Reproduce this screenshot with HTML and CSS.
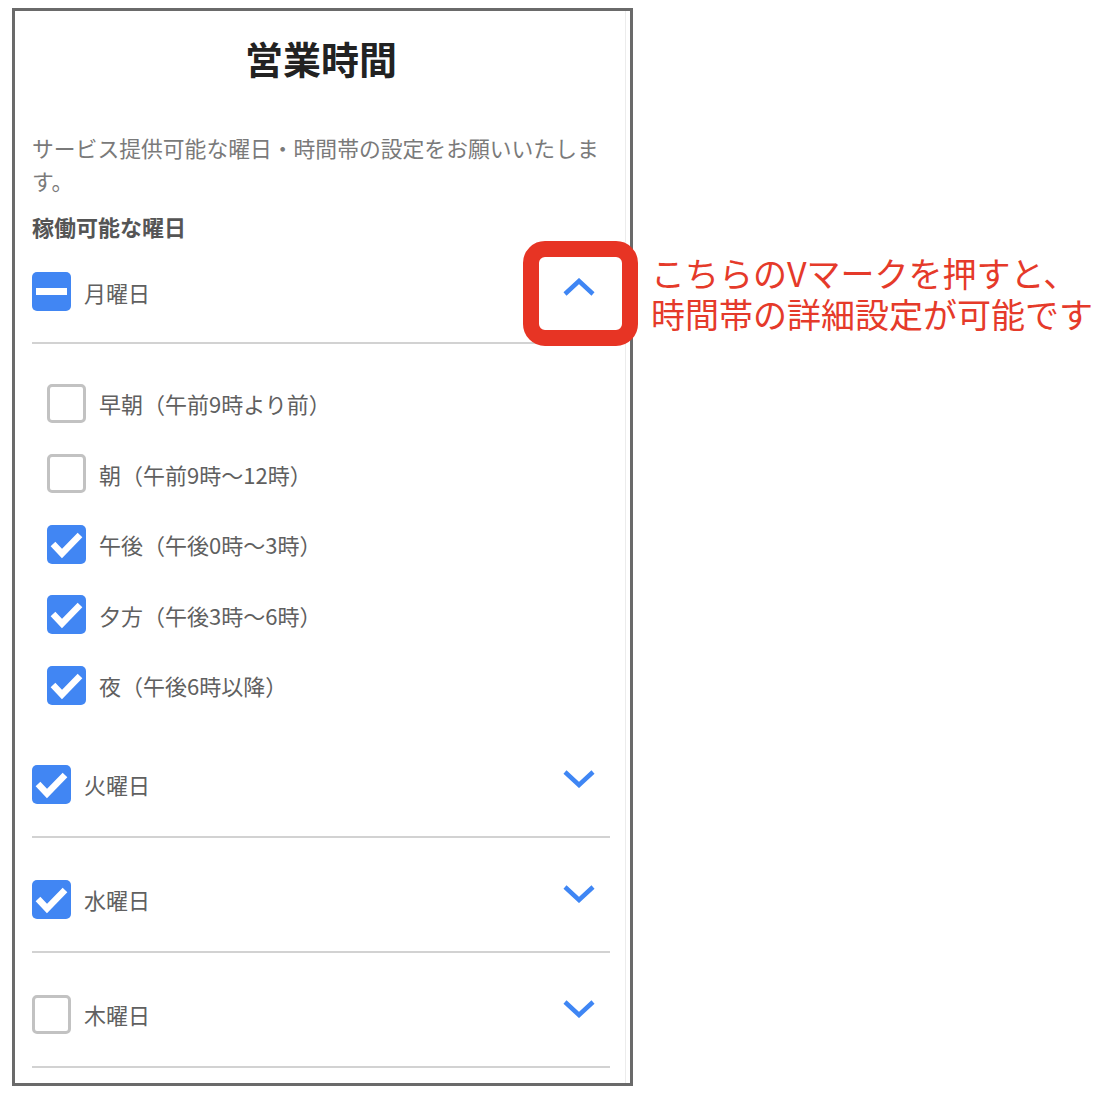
FILE: index.html
```html
<!DOCTYPE html>
<html lang="ja">
  <head>
    <meta charset="UTF-8" />
    <meta name="viewport" content="width=device-width, initial-scale=1.0" />
    <title>営業時間</title>
    <link rel="stylesheet" href="styles.css">
  </head>
  <body>
    <div class="page">
      <div class="phone">
        <h1 class="title">営業時間</h1>
        <p class="desc">サービス提供可能な曜日・時間帯の設定をお願いいたします。</p>
        <h2 class="section">稼働可能な曜日</h2>

        <div class="day first">
          <span class="box partial"><span class="bar"></span></span>
          <span class="label">月曜日</span>
          <svg class="chevron" viewBox="0 0 32 18"><polyline points="2,16 16,3 30,16" /></svg>
        </div>
        <div class="slots">
          <div class="slot">
            <span class="box"></span>
            <span class="label">早朝（午前9時より前）</span>
          </div>
          <div class="slot">
            <span class="box"></span>
            <span class="label">朝（午前9時〜12時）</span>
          </div>
          <div class="slot">
            <span class="box checked"><svg viewBox="0 0 39 39"><polyline points="6,19 15,28.5 33,10" /></svg></span>
            <span class="label">午後（午後0時〜3時）</span>
          </div>
          <div class="slot">
            <span class="box checked"><svg viewBox="0 0 39 39"><polyline points="6,19 15,28.5 33,10" /></svg></span>
            <span class="label">夕方（午後3時〜6時）</span>
          </div>
          <div class="slot">
            <span class="box checked"><svg viewBox="0 0 39 39"><polyline points="6,19 15,28.5 33,10" /></svg></span>
            <span class="label">夜（午後6時以降）</span>
          </div>
        </div>

        <div class="day">
          <span class="box checked"><svg viewBox="0 0 39 39"><polyline points="6,19 15,28.5 33,10" /></svg></span>
          <span class="label">火曜日</span>
          <svg class="chevron" viewBox="0 0 32 18"><polyline points="2,2 16,15 30,2" /></svg>
        </div>
        <div class="day">
          <span class="box checked"><svg viewBox="0 0 39 39"><polyline points="6,19 15,28.5 33,10" /></svg></span>
          <span class="label">水曜日</span>
          <svg class="chevron" viewBox="0 0 32 18"><polyline points="2,2 16,15 30,2" /></svg>
        </div>
        <div class="day">
          <span class="box"></span>
          <span class="label">木曜日</span>
          <svg class="chevron" viewBox="0 0 32 18"><polyline points="2,2 16,15 30,2" /></svg>
        </div>
      </div>

      <!-- annotation over the screenshot -->
      <div class="marker"></div>
      <div class="note">
        <div class="note-line">こちらのVマークを押すと、</div>
        <div class="note-line">時間帯の詳細設定が可能です</div>
      </div>
    </div>
  </body>
</html>
```

FILE: styles.css
```css
html,
body {
  margin: 0;
  padding: 0;
  background: #fff;
}

body {
  font-family: "Noto Sans CJK JP", "Noto Sans", sans-serif;
}

.page {
  position: relative;
  box-sizing: border-box;
  width: 1098px;
  height: 1106px;
  padding: 8px 0 0 12px;
}

.phone {
  box-sizing: border-box;
  width: 621px;
  height: 1078px;
  padding: 0 20px 0 17px;
  border: 3px solid #6a6a6a;
  box-shadow: inset -4px 0 0 #fff, inset -5px 0 0 #ececec;
}

.title {
  margin: 0;
  padding-top: 22px;
  font-size: 38px;
  line-height: 50px;
  font-weight: 700;
  color: #222;
  text-align: center;
}

.desc {
  margin: 48px 0 0;
  font-size: 21.8px;
  line-height: 33px;
  color: #7a7a7a;
}

.section {
  margin: 14px 0 0;
  font-size: 22px;
  line-height: 30px;
  font-weight: 700;
  color: #555;
}

.day {
  display: flex;
  align-items: center;
  gap: 13px;
  padding: 42px 0 32px;
  border-bottom: 2px solid #d2d2d2;
}

.day.first {
  padding-top: 31px;
  padding-bottom: 31px;
}

.slots {
  display: flex;
  flex-direction: column;
  gap: 31.5px;
  padding: 39.5px 0 18px 15px;
}

.slot {
  display: flex;
  align-items: center;
  gap: 13px;
}

.label {
  font-size: 22px;
  line-height: 30px;
  color: #606060;
}

.box {
  box-sizing: border-box;
  flex: none;
  display: flex;
  align-items: center;
  justify-content: center;
  width: 39px;
  height: 39px;
  border: 3px solid #c2c2c2;
  border-radius: 5px;
  background: #fff;
}

.box.checked,
.box.partial {
  border: none;
  background: #4186f3;
}

.box svg {
  width: 39px;
  height: 39px;
}

.box polyline {
  fill: none;
  stroke: #fff;
  stroke-width: 6.5;
}

.bar {
  width: 31px;
  height: 7px;
  background: #fff;
}

.chevron {
  flex: none;
  width: 32px;
  height: 18px;
  margin: 0 15px 10px auto;
}

.chevron polyline {
  fill: none;
  stroke: #3f86f4;
  stroke-width: 4.5;
}

.marker {
  position: absolute;
  left: 523px;
  top: 241px;
  box-sizing: border-box;
  width: 115px;
  height: 105px;
  border: 16px solid #e73424;
  border-radius: 22px;
}

.note {
  position: absolute;
  left: 651px;
  top: 252px;
  font-size: 34px;
  color: #e53a2a;
  white-space: nowrap;
}

.note-line {
  height: 41px;
  line-height: 41px;
}
```
